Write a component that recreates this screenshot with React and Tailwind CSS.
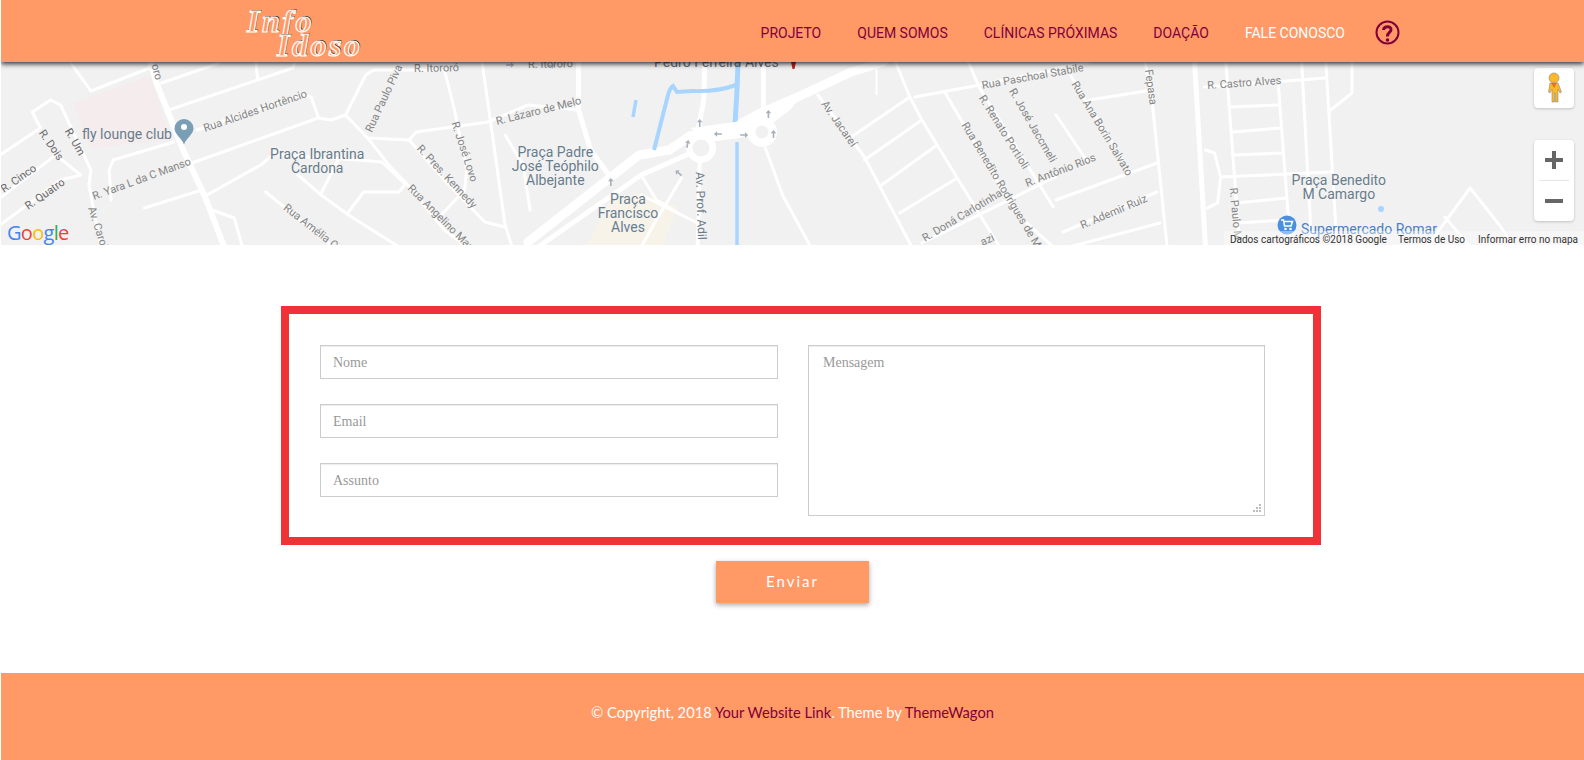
const fx = (x) => {
  const o = x < 528 ? 0 : x < 1056 ? 528 : 1056;
  return +(o + (x - o) * 1.0101).toFixed(1);
};
const pts = (s) => s.split(" ").map((p) => { const [x, y] = p.split(","); return `${fx(+x)},${y}`; }).join(" ");

const ROADS = [
  [6, "148,60 155,83 180,147 203,197 222,247"],
  [3, "68,60 90,91 148,68"],
  [3, "167,110 290,68 293,60"],
  [3, "253,60 255,78"],
  [3, "160,83 217,63"],
  [3, "110,200 108,170 112,160 172,142"],
  [3, "143,208 200,190"],
  [3, "195,130 297,95 308,97 315,117"],
  [3, "190,163 315,118 328,120 342,115 362,75 370,70 440,70"],
  [3, "342,115 364,138 405,140 412,132 483,122"],
  [3, "364,138 385,165 402,183 440,230 462,247"],
  [3, "405,140 440,180 480,222 500,227"],
  [3, "440,70 450,110 462,170 460,190 435,217"],
  [3, "477,60 500,225 507,247"],
  [3, "483,122 528,105 578,110"],
  [3, "276,150 258,165 205,195"],
  [3, "276,155 355,160 378,162 400,183"],
  [3, "295,175 318,195 345,215 395,247"],
  [3, "340,150 318,193"],
  [3, "345,212 360,192 395,192 402,183"],
  [3, "263,192 330,247"],
  [3, "210,210 232,218 240,247"],
  [3, "0,155 40,128 32,112 50,100 60,105 90,170 88,185 100,247"],
  [3, "0,198 55,155 80,175 60,180 0,225"],
  [3, "500,135 518,165 530,210"],
  [9, "528,242 638,155 668,150 688,136 731,128 758,113 795,97 848,72 880,62"],
  [5, "538,247 640,175 685,155"],
  [5, "703,60 702,100 696,132"],
  [5, "761,60 761,112"],
  [5, "578,60 578,110 590,150 608,175"],
  [4, "698,160 696,247"],
  [3, "763,148 780,195 808,247"],
  [3, "640,175 655,200 680,215"],
  [3, "680,178 655,220 640,247"],
  [3, "640,195 700,225"],
  [2, "873,70 873,94"],
  [3, "815,95 861,157 908,247"],
  [3, "891,60 906,97 918,120 933,145 953,178 995,247"],
  [3, "906,97 848,137"],
  [3, "918,120 861,160"],
  [3, "933,145 878,185"],
  [3, "953,178 896,213"],
  [3, "941,93 1011,213 1048,247"],
  [3, "963,60 975,88 1048,207"],
  [3, "911,97 975,85 1050,70"],
  [3, "1056,68 1090,62"],
  [3, "918,243 1050,177"],
  [3, "1056,200 1156,163"],
  [3, "1063,232 1156,192"],
  [3, "1069,247 1159,223"],
  [3, "1089,100 1151,90"],
  [3, "1056,115 1086,160"],
  [3, "1069,73 1128,170"],
  [3, "1144,60 1151,100 1166,247"],
  [5, "1193,60 1204,247"],
  [3, "1224,60 1238,247"],
  [3, "1203,87 1323,78"],
  [3, "1228,107 1276,105"],
  [3, "1231,132 1278,128"],
  [3, "1233,155 1281,153"],
  [3, "1219,177 1329,172"],
  [3, "1234,203 1284,198"],
  [3, "1236,223 1283,220"],
  [3, "1276,83 1288,243"],
  [3, "1299,60 1309,243"],
  [3, "1323,60 1334,243"],
  [3, "1349,60 1349,93 1328,110"],
  [3, "1204,150 1213,153 1219,177 1216,203 1206,208"],
  [3, "1423,247 1466,188 1495,225 1510,247"],
  [3, "1441,217 1466,247"],
];

const G = "#858585";
const D = "#666666";
const LABELS = [
  ["oro", 150, 65, 75, 11, G],
  ["R. Itororó", 410, 72, -1, 11, G],
  ["R. Itororó", 528, 68, -1, 11, G],
  ["Rua Paulo Piva", 368, 133, -65, 11, G],
  ["Rua Alcides Hortêncio", 203, 132, -19, 11, G],
  ["R. Um", 64, 131, 60, 11, D],
  ["R. Dois", 38, 133, 55, 11, D],
  ["R. Cinco", 4, 193, -35, 11, D],
  ["R. Quatro", 28, 210, -35, 11, D],
  ["R. Yara L da C Manso", 93, 200, -20, 11, G],
  ["Av. Carol", 87, 208, 72, 11, G],
  ["Rua Amélia C", 280, 209, 38, 11, G],
  ["Rua Angelino Mar", 403, 189, 45, 11, G],
  ["R. Pres. Kennedy", 412, 149, 47, 11, G],
  ["R. José Lovo", 447, 123, 72, 11, G],
  ["R. Lázaro de Melo", 492, 125, -14, 11, G],
  ["Av. Prof. Adil", 694, 172, 88, 12, "#6b7a87"],
  ["Av. Jacareí", 818, 104, 55, 11, G],
  ["Rua Paschoal Stabile", 978, 89, -10, 11, G],
  ["R. Renato Portioli", 974, 98, 58, 11, G],
  ["R. José Jaccmeli", 1004, 91, 60, 11, G],
  ["Rua Benedito Rodrigues de Mor", 957, 125, 59, 11, G],
  ["R. Doná Carlotinha", 921, 242, -31, 11, G],
  ["R. Antônio Rios", 1022, 187, -21, 11, G],
  ["Rua Ana Borin Salvato", 1071, 84, 59, 11, G],
  ["R. Ademir Ruiz", 1082, 229, -23, 11, G],
  ["R. Castro Alves", 1206, 89, -4, 11, G],
  ["Fepasa", 1144, 70, 82, 11, G],
  ["R. Paulo M", 1228, 188, 85, 11, G],
  ["azi", 978, 246, -25, 11, G],
];

const POIS = [
  ["Praça Ibrantina", 314, 159],
  ["Cardona", 314, 173],
  ["Praça Padre", 555, 157],
  ["José Teóphilo", 555, 171],
  ["Albejante", 555, 185],
  ["Praça", 627, 204],
  ["Francisco", 627, 218],
  ["Alves", 627, 232],
  ["Praça Benedito", 1336, 185],
  ["M Camargo", 1336, 199],
];

const ARROWS = [
  [698, 123, 180], [686, 144, 190], [716, 134, 90], [742, 135, 270], [766, 114, 180],
  [771, 134, 180], [610, 182, 180], [677, 173, 130], [505, 65, 270], [551, 66, 270],
];

function MapDrawing() {
  return (
    <svg viewBox="1 62 1583 183" className="block w-full h-full">
      <rect x="0" y="62" width="1584" height="183" fill="#f1f1f1" />
      <polygon points="73,103 150,75 172,140 91,148" fill="#f5eded" />
      <polygon points="587,245 610,200 643,193 678,207 663,245" fill="#f8f3e8" />
      {ROADS.map(([w, p], i) => (
        <polyline key={i} points={pts(p)} fill="none" stroke="#ffffff" strokeWidth={w} strokeLinejoin="round" strokeLinecap="round" />
      ))}
      <g fill="none" stroke="#a8d5fd">
        <path d="M738 62 L737 90 L735 125" strokeWidth="5" />
        <path d="M737 142 L737 245" strokeWidth="3.500" />
        <path d="M736 85 Q717 92 692 91 L677 92 L673 86 Q670 88 668 95 L654 150" strokeWidth="4" />
        <path d="M636 100 L633 117" strokeWidth="3.500" />
      </g>
      <polygon points="690,128 735,122 765,112 800,98 790,110 770,125 740,138 710,142" fill="#fff" />
      <circle cx="701" cy="148" r="15" fill="#fff" />
      <circle cx="701" cy="148" r="8.500" fill="#f1f1f1" />
      <circle cx="762" cy="132" r="15" fill="#fff" />
      <circle cx="762" cy="132" r="6.500" fill="#f1f1f1" />
      {ARROWS.map(([x, y, r], i) => (
        <path key={i} transform={`translate(${fx(x)} ${y}) rotate(${r}) scale(0.8)`} d="M-1 -5 L1 -5 L1 1 L3.500 1 L0 5 L-3.500 1 L-1 1 Z" fill="#a6b0bc" />
      ))}
      <g fontFamily="Roboto, sans-serif">
        {LABELS.map(([t, x, y, r, s, c], i) => (
          <text key={i} transform={`translate(${fx(x)} ${y}) rotate(${r})`} fontSize={s} fill={c} stroke="#f1f1f1" strokeWidth="0.4" paintOrder="stroke">{t}</text>
        ))}
        {POIS.map(([t, x, y], i) => (
          <text key={i} x={fx(x)} y={y} textAnchor="middle" fontSize="14" fill="#687c8b" stroke="#f5f5f5" strokeWidth="1" paintOrder="stroke">{t}</text>
        ))}
        <text x="82" y="139" fontSize="14" fill="#687c8b">fly lounge club</text>
        <text x="654" y="67" fontSize="14" fill="#6b6f73">Pedro Ferreira Alves</text>
        <text x="1301" y="234" fontSize="14" fill="#4a7fc1">Supermercado Romar</text>
      </g>
      <path d="M184 119 a9.500 9.500 0 0 1 9.500 9.500 c0 6 -7 9 -9.500 16 c-2.500 -7 -9.500 -10 -9.500 -16 a9.500 9.500 0 0 1 9.500 -9.500z" fill="#7a9fb5" />
      <circle cx="184" cy="127" r="3" fill="#fff" />
      <path d="M791 62 h5 l-1.500 7 h-2z" fill="#c5221f" />
      <circle cx="1287" cy="225" r="9.500" fill="#4a90e2" />
      <path d="M1281 220 h2.500 l1 6 h6.500 l1.500 -4.500 h-8" fill="none" stroke="#fff" strokeWidth="1.500" />
      <circle cx="1285.500" cy="229" r="1.300" fill="#fff" />
      <circle cx="1290.500" cy="229" r="1.300" fill="#fff" />
      <circle cx="1381" cy="209" r="3" fill="#a9d4fb" />
      <text x="7" y="240" fontFamily="'Open Sans', sans-serif" fontSize="20" fontWeight="500" letterSpacing="-0.7">
        <tspan fill="#4285f4">G</tspan><tspan fill="#ea4335">o</tspan><tspan fill="#fbbc05">o</tspan><tspan fill="#4285f4">g</tspan><tspan fill="#34a853">l</tspan><tspan fill="#ea4335">e</tspan>
      </text>
    </svg>
  );
}

function Pegman() {
  return (
    <svg width="18" height="32" viewBox="0 0 18 32">
      <circle cx="9" cy="6" r="5" fill="#fbb829" stroke="#8a8a8a" strokeWidth="0.6" />
      <path d="M5 11 h8 l3.500 9 l-1.500 1 l-2 -4 v13 h-2.500 v-9 h-1 v9 h-2.500 v-13 l-2 4 l-1.500 -1z" fill="#fbb829" stroke="#8a8a8a" strokeWidth="0.6" />
      <path d="M6 11 h6 l-3 5z" fill="#e0762c" />
    </svg>
  );
}

function HelpIcon() {
  return (
    <svg width="25" height="25" viewBox="0 0 25 25" fill="none" stroke="#80003a" className="-ml-[6px] -mt-[1px]">
      <circle cx="12.500" cy="12.500" r="11" strokeWidth="2" />
      <path d="M8.500 10 C8.500 5.500 16.500 5.500 16 10 C15.800 12.500 12 12.500 12.500 16.500" strokeWidth="3" />
      <circle cx="12.500" cy="20" r="1.800" fill="#80003a" stroke="none" />
    </svg>
  );
}

function Logo() {
  return (
    <div className="w-[112px] h-[56px] pt-[6px] flex flex-col font-['Liberation_Serif',serif] italic font-bold text-[32px] leading-[24px] tracking-[2.500px] text-[#ff9966] [-webkit-text-stroke:1.200px_#ffffff] [text-shadow:1px_-1px_0_#222222]">
      <span>Info</span>
      <span className="ml-[30px]">Idoso</span>
    </div>
  );
}

function Grip() {
  return (
    <svg width="9" height="9" viewBox="0 0 9 9" fill="#bdbdbd" className="absolute right-[3px] bottom-[3px]">
      <rect x="6" y="0" width="2" height="2" />
      <rect x="3" y="3" width="2" height="2" />
      <rect x="6" y="3" width="2" height="2" />
      <rect x="0" y="6" width="2" height="2" />
      <rect x="3" y="6" width="2" height="2" />
      <rect x="6" y="6" width="2" height="2" />
    </svg>
  );
}

const NAV = ["PROJETO", "QUEM SOMOS", "CLÍNICAS PRÓXIMAS", "DOAÇÃO"];
const inputCls = "block w-[458px] h-[34px] border border-[#cccccc] px-3 pt-[2px] bg-white text-[14px] font-['Liberation_Serif',serif] placeholder:text-[#999999] shadow-[inset_0_1px_1px_rgba(0,0,0,0.075)] outline-none";

export default function App() {
  return (
    <div className="ml-px h-[760px] bg-white overflow-hidden">
      <header className="relative z-10 h-[62px] bg-[#ff9966] shadow-[0_2px_5px_rgba(0,0,0,0.8)] flex items-center pl-[246px]">
        <Logo />
        <nav className="ml-auto mr-[184px] pt-[4px] flex items-center gap-[36px] font-['Roboto',sans-serif] text-[14px] text-[#80003a]">
          {NAV.map((n) => (
            <a key={n}>{n}</a>
          ))}
          <a className="text-white">FALE CONOSCO</a>
          <HelpIcon />
        </nav>
      </header>

      <section className="relative h-[183px] overflow-hidden">
        <MapDrawing />
        <div className="absolute left-[1533px] top-[6px] w-[40px] h-[40px] bg-white rounded-sm shadow-[0_1px_3px_rgba(0,0,0,0.2)] flex items-center justify-center">
          <Pegman />
        </div>
        <div className="absolute left-[1533px] top-[78px] w-[40px] h-[81px] bg-white rounded-sm shadow-[0_1px_3px_rgba(0,0,0,0.2)] flex flex-col items-center">
          <div className="h-[40px] flex items-center justify-center">
            <div className="relative w-[18px] h-[18px]">
              <div className="absolute left-0 top-[7px] w-[18px] h-[4px] bg-[#666666]" />
              <div className="absolute left-[7px] top-0 w-[4px] h-[18px] bg-[#666666]" />
            </div>
          </div>
          <div className="w-[30px] h-px bg-[#e6e6e6]" />
          <div className="h-[40px] flex items-center justify-center">
            <div className="w-[18px] h-[4px] bg-[#666666]" />
          </div>
        </div>
        <div className="absolute right-0 bottom-0 h-[14px] pl-[6px] pr-[6px] pt-[2px] bg-white/40 flex items-center font-['Roboto',sans-serif] text-[10px] text-[#333333] whitespace-nowrap">
          <span className="w-[168px]">Dados cartográficos ©2018 Google</span>
          <span className="w-[80px]">Termos de Uso</span>
          <span>Informar erro no mapa</span>
        </div>
      </section>

      <main className="pt-[61px] flex flex-col items-center h-[428px]">
        <form className="self-start ml-[280px] w-[1040px] h-[239px] border-8 border-[#f03237] flex gap-[30px] pl-[31px] pt-[31px]">
          <div className="flex flex-col gap-[25px]">
            <input className={inputCls} placeholder="Nome" />
            <input className={inputCls} placeholder="Email" />
            <input className={inputCls} placeholder="Assunto" />
          </div>
          <div className="relative w-[457px] h-[171px]">
            <textarea
              className="block w-full h-full resize-none border border-[#cccccc] px-[14px] py-[7px] bg-white text-[14px] leading-[20px] font-['Liberation_Serif',serif] placeholder:text-[#999999] shadow-[inset_0_1px_1px_rgba(0,0,0,0.075)] outline-none"
              placeholder="Mensagem"
            />
            <Grip />
          </div>
        </form>
        <button className="mt-[16px] w-[153px] h-[42px] pb-[1px] bg-[#ff9966] text-white font-['Lato',sans-serif] text-[15px] tracking-[2px] shadow-[0_2px_5px_rgba(0,0,0,0.35)]">
          Enviar
        </button>
      </main>

      <footer className="h-[87px] pb-[8px] bg-[#ff9966] flex items-center justify-center font-['Lato',sans-serif] text-[14.700px] text-white">
        <span>
          © Copyright, 2018 <a className="text-[#80003a]">Your Website Link</a>. Theme by <a className="text-[#80003a]">ThemeWagon</a>
        </span>
      </footer>
    </div>
  );
}
